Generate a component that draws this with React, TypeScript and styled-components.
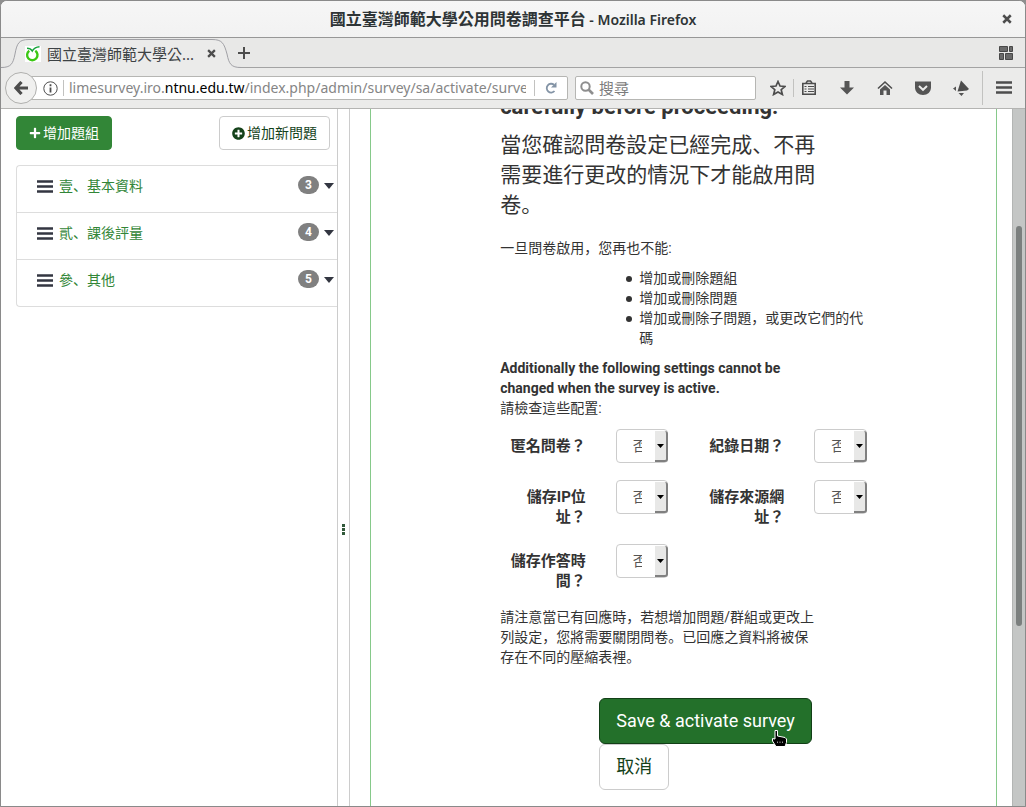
import React from 'react';
import styled, { createGlobalStyle, css } from 'styled-components';
import { FaPlus, FaPlusCircle } from 'react-icons/fa';

const chromeFont = '"Noto Sans", "Noto Sans CJK TC", sans-serif';
const pageFont = 'Roboto, "Noto Sans CJK SC", sans-serif';
const labelFont = 'Roboto, "Noto Sans CJK TC", sans-serif';

const GlobalStyle = createGlobalStyle`
  *, *::before, *::after { box-sizing: border-box; }
  body { margin: 0; background: #8e8e8e; }
  button, input, select { font-family: inherit; }
  h1, h2, p, ul { margin: 0; padding: 0; }
`;

/* ---------- browser window ---------- */

const Window = styled.div`
  display: flex;
  flex-direction: column;
  height: 100vh;
  overflow: hidden;
  background: #fff;
  border: 1px solid #8a8a8a;
  border-radius: 7px 7px 0 0;
`;

const TitleBar = styled.header`
  display: flex;
  align-items: center;
  flex: none;
  height: 37px;
  padding: 0 12px 0 24px;
  background: linear-gradient(#f6f6f6, #f2f2f2);
  border-bottom: 1px solid #979797;
  color: #2e3436;
  font-family: ${chromeFont};
`;

const WindowTitle = styled.h1`
  flex: 1;
  text-align: center;
  font-size: 14px;
  font-weight: 600;
  line-height: 20px;
  white-space: pre;
`;

const TitleCjk = styled.span`
  font-size: 16px;
`;

const IconButton = styled.button<{ $w?: number }>`
  display: flex;
  align-items: center;
  justify-content: center;
  flex: none;
  width: ${(p) => p.$w ?? 16}px;
  height: 24px;
  padding: 0;
  border: 0;
  background: none;
  color: #4d4d4d;
`;

const TabStrip = styled.div`
  display: flex;
  flex: none;
  align-items: center;
  height: 30px;
  padding-right: 11px;
  background: #e8e8e7;
  border-bottom: 1px solid #a3a3a3;
  font-family: ${chromeFont};
`;

const Tab = styled.div`
  position: relative;
  display: flex;
  flex: none;
  align-items: center;
  width: 235px;
  height: 30px;
  padding: 2px 17px 0 24px;
  color: #3d4244;
  font-size: 15px;
  line-height: 20px;
`;

const TabShape = styled.svg`
  position: absolute;
  left: 0;
  top: 0;
`;

const TabLabel = styled.span`
  position: relative;
  flex: 1;
  margin-left: 6px;
  white-space: nowrap;
`;

const TabIcon = styled.svg`
  position: relative;
`;

const TabClose = styled(IconButton)`
  position: relative;
`;

const Spacer = styled.div`
  flex: 1;
`;

const NavBar = styled.nav`
  display: flex;
  flex: none;
  align-items: center;
  height: 41px;
  padding-left: 4px;
  background: #ebebea;
  border-bottom: 1px solid #b4b4b2;
  font-family: ${chromeFont};
`;

const BackButton = styled.button`
  display: flex;
  align-items: center;
  justify-content: center;
  flex: none;
  position: relative;
  width: 32px;
  height: 32px;
  padding: 0;
  border: 1px solid #b0b0ae;
  border-radius: 50%;
  background: #f0f0ef;
  color: #4d4d4d;
`;

const fieldBox = css`
  display: flex;
  align-items: center;
  height: 24px;
  border: 1px solid #b6b6b3;
  background: #fff;
`;

const AddressBox = styled.div`
  ${fieldBox}
  flex: 1;
  min-width: 0;
  margin-left: -6px;
  padding-left: 11px;
  border-radius: 0 2px 2px 0;
`;

const Divider = styled.span<{ $h: number }>`
  flex: none;
  width: 1px;
  height: ${(p) => p.$h}px;
  background: #c2c2c0;
`;

const AddressDivider = styled(Divider)`
  margin: 0 5px;
`;

const Address = styled.div`
  flex: 1;
  min-width: 0;
  margin-right: 8px;
  overflow: hidden;
  color: #858585;
  font-size: 14px;
  line-height: 22px;
  white-space: nowrap;
`;

const AddressHost = styled.span`
  color: #000;
`;

const SearchBox = styled.label`
  ${fieldBox}
  flex: none;
  width: 181px;
  margin-left: 7px;
  padding-left: 4px;
  border-radius: 2px;
`;

const SearchInput = styled.input`
  flex: 1;
  min-width: 0;
  margin-left: 5px;
  padding: 0;
  border: 0;
  outline: 0;
  background: none;
  font-size: 15px;
  line-height: 20px;
  &::placeholder { color: #7c7c7c; opacity: 1; }
`;

const Tools = styled.div`
  display: flex;
  flex: none;
  align-items: center;
  margin-left: 14px;
`;

const ToolGroup = styled.div`
  display: flex;
  gap: 22px;
  margin: 0 13px 0 7px;
`;

const StarSlot = styled.div`
  margin-right: 7px;
`;

/* ---------- page ---------- */

const Page = styled.div`
  display: flex;
  flex: 1;
  min-height: 0;
  color: #333;
  font-family: ${pageFont};
  font-size: 14px;
  line-height: 20px;
`;

const Sidebar = styled.aside`
  flex: none;
  width: 337px;
  padding: 7px 0 0 15px;
  border-right: 1px solid #ccc;
`;

const SidebarActions = styled.div`
  display: flex;
  justify-content: space-between;
  margin-right: 7px;
`;

const Button = styled.button<{ $primary?: boolean; $large?: boolean }>`
  display: inline-flex;
  align-items: center;
  gap: 2px;
  height: ${(p) => (p.$large ? 46 : 34)}px;
  padding: 0 ${(p) => (p.$large ? 16 : 12)}px;
  border: 1px solid ${(p) => (p.$primary ? (p.$large ? '#123f17' : '#328637') : '#ccc')};
  border-radius: ${(p) => (p.$large ? 6 : 4)}px;
  background: ${(p) => (p.$primary ? (p.$large ? '#23702a' : '#328637') : '#fff')};
  color: ${(p) => (p.$primary ? '#fff' : '#14421a')};
  font-size: ${(p) => (p.$large ? 18 : 14)}px;
  line-height: ${(p) => (p.$large ? 24 : 20)}px;
  vertical-align: top;
  white-space: nowrap;
`;

const GroupList = styled.ul`
  margin-top: 15px;
  border: 1px solid #ddd;
  border-right: 0;
  border-radius: 4px 0 0 4px;
  list-style: none;
`;

const GroupRow = styled.li`
  display: flex;
  align-items: center;
  height: 47px;
  padding: 0 3px 6px 20px;
  color: #333641;
  & + & { border-top: 1px solid #ddd; }
  &:first-child { height: 46px; }
`;

const GroupLink = styled.a`
  flex: 1;
  margin-left: 6px;
  color: #328637;
  text-decoration: none;
`;

const Badge = styled.span`
  width: 21px;
  height: 18px;
  margin: 0 5px 2px 0;
  border-radius: 10px;
  background: #808080;
  color: #fff;
  font-size: 12px;
  font-weight: 700;
  line-height: 18px;
  text-align: center;
`;

const Splitter = styled.div`
  display: flex;
  flex: none;
  flex-direction: column;
  align-items: center;
  justify-content: center;
  gap: 1px;
  width: 12px;
  padding-top: 143px;
  border-right: 1px solid #ccc;
`;

const Grip = styled.span`
  width: 3px;
  height: 3px;
  background: #31593a;
`;

const Main = styled.main`
  flex: 1;
  min-width: 0;
  padding: 0 15px 0 20px;
  overflow: hidden;
`;

const Panel = styled.section`
  display: grid;
  grid-template-columns: repeat(12, minmax(0, 1fr));
  align-content: start;
  min-height: 100%;
  padding: 0 15px;
  border: solid #86c98a;
  border-width: 0 1px;
`;

const Block = styled.div<{ $start: number; $span: number; $top?: number }>`
  grid-column: ${(p) => p.$start} / span ${(p) => p.$span};
  margin-top: ${(p) => p.$top ?? 0}px;
  padding: 0 15px;
`;

const Warning = styled.h2`
  font-size: 22px;
  font-weight: 700;
  line-height: 30px;
`;

const Lead = styled.p`
  margin-top: 8px;
  font-size: 21px;
  line-height: 30px;
`;

const Limits = styled.ul`
  padding-left: 27px;
  list-style: none;
`;

const Limit = styled.li`
  display: flex;
  gap: 7px;
  &::before {
    content: '';
    flex: none;
    width: 6px;
    height: 6px;
    margin-top: 8px;
    border-radius: 50%;
    background: #333;
  }
`;

const Settings = styled.form`
  grid-column: 3 / span 8;
  display: grid;
  grid-template-columns: 1fr 1fr;
  gap: 17px 0;
  margin-top: 11px;
`;

const Field = styled.div`
  display: grid;
  grid-template-columns: 7fr 5fr;
  align-items: start;
`;

const FieldLabel = styled.label`
  padding: 7px 15px 0;
  font-family: ${labelFont};
  font-size: 15px;
  font-weight: 700;
  text-align: right;
`;

const SelectBox = styled.div`
  position: relative;
  display: flex;
  min-width: 0;
  height: 34px;
  margin: 0 15px;
`;

const Select = styled.select`
  appearance: none;
  width: 100%;
  height: 34px;
  padding: 6px 25px 6px 16px;
  border: 1px solid #ccc;
  border-radius: 4px;
  background: #fff;
  color: #555;
  font-size: 14px;
  line-height: 20px;
  text-overflow: clip;
`;

const SelectArrow = styled.span`
  position: absolute;
  top: 2px;
  right: 0;
  bottom: 1px;
  display: flex;
  align-items: center;
  justify-content: center;
  width: 13px;
  background: #e8e8e7;
  border: solid #808080;
  border-width: 0 2px 2px 0;
  border-radius: 0 3px 3px 0;
  color: #000;
  pointer-events: none;
`;

const Pointer = styled.svg`
  position: absolute;
  right: 25px;
  bottom: -3px;
`;

const SaveWrap = styled.span`
  position: relative;
  display: inline-block;
  vertical-align: top;
`;

const ScrollTrack = styled.div`
  flex: none;
  width: 13px;
  padding: 117px 3px 0;
  background: #c4c6c5;
  border-left: 1px solid #b3b5b4;
`;

const ScrollThumb = styled.div`
  width: 6px;
  height: 69%;
  border-radius: 3px;
  background: #7b7f7e;
`;

/* ---------- icons ---------- */

const CloseIcon = ({ size }: { size: number }) => (
  <svg width={size} height={size} viewBox="0 0 8 8">
    <path d="M1 1L7 7M7 1L1 7" stroke="currentColor" strokeWidth="2" />
  </svg>
);

const BarsIcon = () => (
  <svg width="16" height="13" viewBox="0 0 16 13">
    <path d="M0 1.500H16M0 6.500H16M0 11.500H16" stroke="currentColor" strokeWidth="2.600" />
  </svg>
);

const CaretIcon = ({ w, h }: { w: number; h: number }) => (
  <svg width={w} height={h} viewBox="0 0 10 6" preserveAspectRatio="none">
    <path d="M0 0H10L5 6Z" fill="currentColor" />
  </svg>
);

const groups = [
  { name: '壹、基本資料', count: 3 },
  { name: '貳、課後評量', count: 4 },
  { name: '參、其他', count: 5 },
];

const settings = [
  { id: 'anonymized', label: '匿名問卷？' },
  { id: 'datestamp', label: '紀錄日期？' },
  { id: 'ipaddr', label: '儲存IP位址？' },
  { id: 'refurl', label: '儲存來源網址？' },
  { id: 'savetimings', label: '儲存作答時間？' },
];

const BrowserChrome = () => (
  <>
    <TitleBar>
      <WindowTitle>
        <TitleCjk>國立臺灣師範大學公用問卷調查平台</TitleCjk> - Mozilla Firefox
      </WindowTitle>
      <IconButton $w={12} aria-label="Close window">
        <CloseIcon size={10} />
      </IconButton>
    </TitleBar>
    <TabStrip>
      <Tab>
        <TabShape width="240" height="30" viewBox="0 0 240 30">
          <path d="M0 29.500C10 29.500 12 26 14 16C16 5 18 1.500 28 1.500H211C221 1.500 223 5 226 16C228 26 230 29.500 240 29.500V30H0Z" fill="#ebebea" />
          <path d="M0 29.500C10 29.500 12 26 14 16C16 5 18 1.500 28 1.500H211C221 1.500 223 5 226 16C228 26 230 29.500 240 29.500" fill="none" stroke="#a0a0a5" />
        </TabShape>
        <TabIcon width="16" height="16" viewBox="0 0 16 16">
          <rect width="16" height="16" fill="#fff" />
          <path d="M4.300 4.800A5.200 5.200 0 1 0 10.300 4.800" fill="none" stroke="#3cc814" strokeWidth="2.400" />
          <path d="M2 2.200C4.500 2.200 6.200 3.200 7.200 5C8.800 2.600 11 1 14.500 .8" fill="none" stroke="#17a43a" strokeWidth="1.500" />
        </TabIcon>
        <TabLabel>國立臺灣師範大學公...</TabLabel>
        <TabClose aria-label="Close tab">
          <CloseIcon size={9} />
        </TabClose>
      </Tab>
      <IconButton aria-label="New tab">
        <svg width="12" height="12" viewBox="0 0 12 12">
          <path d="M6 0V12M0 6H12" stroke="currentColor" strokeWidth="2" />
        </svg>
      </IconButton>
      <Spacer />
      <IconButton aria-label="Tab groups">
        <svg width="16" height="16" viewBox="0 0 16 16">
          <path d="M1.500 1.500h8v5h-8zM11.500 1.500h3v5h-3zM1.500 8.500h4v6h-4zM7.500 8.500h7v6h-7z" fill="#6a6a6a" stroke="#484848" />
        </svg>
      </IconButton>
    </TabStrip>
    <NavBar>
      <BackButton aria-label="Back">
        <svg width="14" height="14" viewBox="0 0 14 14">
          <path d="M7.500 1L2 7L7.500 13M2 7H14" fill="none" stroke="currentColor" strokeWidth="3.200" />
        </svg>
      </BackButton>
      <AddressBox>
        <svg width="15" height="15" viewBox="0 0 15 15">
          <circle cx="7.500" cy="7.500" r="6.700" fill="none" stroke="#4d4d4d" />
          <path d="M7.500 3.200v2M7.500 6.500v5" stroke="#4d4d4d" strokeWidth="1.800" />
        </svg>
        <AddressDivider $h={16} />
        <Address>
          limesurvey.iro.<AddressHost>ntnu.edu.tw</AddressHost>/index.php/admin/survey/sa/activate/surve
        </Address>
        <Divider $h={16} />
        <IconButton $w={32} aria-label="Reload">
          <svg width="12" height="12" viewBox="0 0 12 12">
            <path d="M9.500 9A4.400 4.400 0 1 1 9 2.800" fill="none" stroke="#8494a6" strokeWidth="1.800" />
            <path d="M11.500 0V5.500H6Z" fill="#8494a6" />
          </svg>
        </IconButton>
      </AddressBox>
      <SearchBox>
        <svg width="14" height="14" viewBox="0 0 14 14">
          <circle cx="5.500" cy="5.500" r="4.200" fill="none" stroke="#8e8e8e" strokeWidth="2" />
          <path d="M8.500 8.500L13 13" stroke="#8e8e8e" strokeWidth="2.600" />
        </svg>
        <SearchInput type="text" placeholder="搜尋" aria-label="搜尋" />
      </SearchBox>
      <Tools>
        <StarSlot>
          <IconButton aria-label="Bookmark">
            <svg width="16" height="16" viewBox="0 0 16 16">
              <path d="M8 1.500L10 6L15 6.400L11.200 9.700L12.400 14.500L8 12L3.600 14.500L4.800 9.700L1 6.400L6 6Z" fill="none" stroke="#4d4d4d" strokeWidth="1.700" />
            </svg>
          </IconButton>
        </StarSlot>
        <Divider $h={18} />
        <ToolGroup>
          <IconButton aria-label="Bookmarks list">
            <svg width="16" height="16" viewBox="0 0 16 16">
              <path d="M1.800 3.500H14.200V14.200H1.800Z" fill="none" stroke="#4d4d4d" strokeWidth="1.600" />
              <path d="M5 3L6.500 1H9.500L11 3" fill="none" stroke="#4d4d4d" strokeWidth="1.600" />
              <path d="M3.500 6.500h2M3.500 9h2M3.500 11.500h2M7 6.500h6M7 9h6M7 11.500h6" stroke="#4d4d4d" />
            </svg>
          </IconButton>
          <IconButton aria-label="Downloads">
            <svg width="16" height="16" viewBox="0 0 16 16">
              <path d="M5.500 1H10.500V7.500H15L8 14.500L1 7.500H5.500Z" fill="#555" />
            </svg>
          </IconButton>
          <IconButton aria-label="Home">
            <svg width="16" height="16" viewBox="0 0 16 16">
              <path d="M1 8.500L8 2L15 8.500" fill="none" stroke="#4d4d4d" strokeWidth="1.600" />
              <path d="M3 9.500L8 5L13 9.500V15H9.500V10.500H6.500V15H3Z" fill="#555" />
            </svg>
          </IconButton>
          <IconButton aria-label="Pocket">
            <svg width="16" height="16" viewBox="0 0 16 16">
              <path d="M0 1.500H16V7.500C16 12 12.500 15 8 15S0 12 0 7.500Z" fill="#555" />
              <path d="M4 6L8 9.800L12 6" fill="none" stroke="#ebebea" strokeWidth="2" />
            </svg>
          </IconButton>
          <IconButton aria-label="Extension">
            <svg width="16" height="16" viewBox="0 0 16 16">
              <path d="M8 .5L16 9L14 10.500L4.500 11.500Z" fill="#4d4d4d" />
              <path d="M0 8.500L3 6.500V11ZM5.500 13L11 13L8.500 16Z" fill="#555" />
            </svg>
          </IconButton>
        </ToolGroup>
        <Divider $h={34} />
        <IconButton $w={42} aria-label="Menu">
          <svg width="16" height="14" viewBox="0 0 16 14">
            <path d="M0 1.500H16M0 6.500H16M0 11.500H16" stroke="#4d4d4d" strokeWidth="2.600" />
          </svg>
        </IconButton>
      </Tools>
    </NavBar>
  </>
);

export default function App() {
  return (
    <>
      <GlobalStyle />
      <Window>
        <BrowserChrome />
        <Page>
          <Sidebar>
            <SidebarActions>
              <Button $primary><FaPlus size={12} />增加題組</Button>
              <Button><FaPlusCircle size={13} />增加新問題</Button>
            </SidebarActions>
            <GroupList>
              {groups.map((g) => (
                <GroupRow key={g.name}>
                  <BarsIcon />
                  <GroupLink href="#">{g.name}</GroupLink>
                  <Badge>{g.count}</Badge>
                  <CaretIcon w={10} h={6} />
                </GroupRow>
              ))}
            </GroupList>
          </Sidebar>
          <Splitter>
            <Grip />
            <Grip />
            <Grip />
          </Splitter>
          <Main>
            <Panel>
              <Block $start={3} $span={7} $top={-17}>
                <Warning>carefully before proceeding!</Warning>
                <Lead>當您確認問卷設定已經完成、不再需要進行更改的情況下才能啟用問卷。</Lead>
              </Block>
              <Block $start={3} $span={7} $top={18}>
                <p>一旦問卷啟用，您再也不能:</p>
              </Block>
              <Block $start={5} $span={6} $top={10}>
                <Limits>
                  <Limit>增加或刪除題組</Limit>
                  <Limit>增加或刪除問題</Limit>
                  <Limit>增加或刪除子問題，或更改它們的代碼</Limit>
                </Limits>
              </Block>
              <Block $start={3} $span={7} $top={10}>
                <p>
                  <strong>Additionally the following settings cannot be changed when the survey is active.</strong>
                  <br />
                  請檢查這些配置:
                </p>
              </Block>
              <Settings>
                {settings.map((s) => (
                  <Field key={s.id}>
                    <FieldLabel htmlFor={s.id}>{s.label}</FieldLabel>
                    <SelectBox>
                      <Select id={s.id} defaultValue="N">
                        <option value="N">否</option>
                        <option value="Y">是</option>
                      </Select>
                      <SelectArrow><CaretIcon w={7} h={4} /></SelectArrow>
                    </SelectBox>
                  </Field>
                ))}
              </Settings>
              <Block $start={3} $span={7} $top={16}>
                <p>請注意當已有回應時，若想增加問題/群組或更改上列設定，您將需要關閉問卷。已回應之資料將被保存在不同的壓縮表裡。</p>
              </Block>
              <Block $start={5} $span={6} $top={31}>
                <SaveWrap>
                  <Button $primary $large>Save &amp; activate survey</Button>
                  <Pointer width="15" height="17" viewBox="0 0 15 17">
                    <path d="M3 .5H5.500V6L13 7.500L14.500 9V12.500L13 16.500H4L.5 11V8.500L3 9Z" fill="#000" stroke="#fff" />
                    <path d="M5.500 11.500V13M8 11.500V13M10.500 11.500V13" stroke="#999" />
                  </Pointer>
                </SaveWrap>
                <Button $large>取消</Button>
              </Block>
            </Panel>
          </Main>
          <ScrollTrack>
            <ScrollThumb />
          </ScrollTrack>
        </Page>
      </Window>
    </>
  );
}
